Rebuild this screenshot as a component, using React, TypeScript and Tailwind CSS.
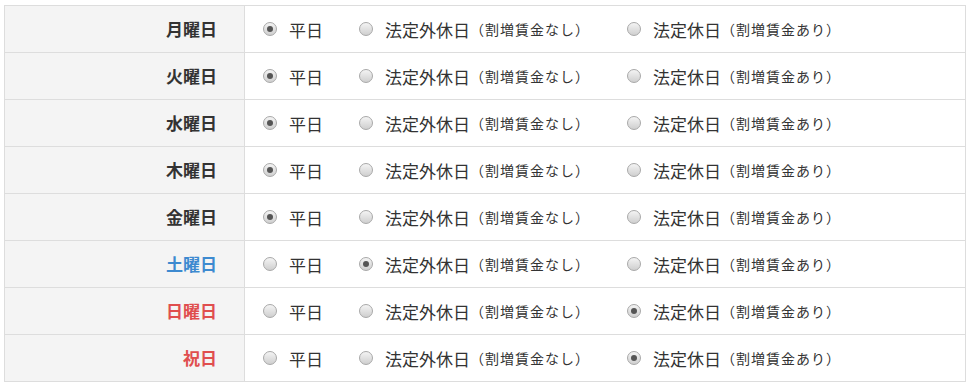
const options = [
  { main: "平日", sub: "" },
  { main: "法定外休日", sub: "（割増賃金なし）" },
  { main: "法定休日", sub: "（割増賃金あり）" },
];

const days = [
  { label: "月曜日", color: "text-[#333333]", value: 0 },
  { label: "火曜日", color: "text-[#333333]", value: 0 },
  { label: "水曜日", color: "text-[#333333]", value: 0 },
  { label: "木曜日", color: "text-[#333333]", value: 0 },
  { label: "金曜日", color: "text-[#333333]", value: 0 },
  { label: "土曜日", color: "text-[#3d8ad0]", value: 1 },
  { label: "日曜日", color: "text-[#e04e4e]", value: 2 },
  { label: "祝日", color: "text-[#e04e4e]", value: 2 },
];

const widths = ["w-[96px]", "w-[268px]", ""];

function Radio({ checked }: { checked: boolean }) {
  return (
    <span className="flex h-[14px] w-[14px] shrink-0 items-center justify-center rounded-full border border-[#a8a8a8] bg-gradient-to-b from-[#f4f4f4] to-[#cfcfcf]">
      {checked && <span className="h-[6px] w-[6px] rounded-full bg-[#555555]" />}
    </span>
  );
}

export default function App() {
  return (
    <div
      className="bg-white pl-[4px] pt-[5px] pr-[6px] text-[#333333]"
      style={{ fontFamily: "'Noto Sans CJK JP', 'Noto Sans', sans-serif" }}
    >
      <div className="border-t border-l border-[#dddddd]">
        {days.map((day) => (
          <div key={day.label} className="flex h-[47px] border-b border-[#dddddd]">
            <div
              className={`flex w-[240px] shrink-0 items-center justify-end border-r border-[#dddddd] bg-[#f4f4f4] pr-[27px] text-[17px] font-bold ${day.color}`}
            >
              {day.label}
            </div>
            <div className="flex flex-1 items-center border-r border-[#dddddd] pl-[18px]">
              {options.map((opt, i) => (
                <label key={opt.main} className={`flex items-center ${widths[i]}`}>
                  <Radio checked={day.value === i} />
                  <span className="ml-[12px] text-[17px] leading-none">{opt.main}</span>
                  {opt.sub && (
                    <span className="text-[14px] leading-none tracking-[1px]">{opt.sub}</span>
                  )}
                </label>
              ))}
            </div>
          </div>
        ))}
      </div>
    </div>
  );
}
